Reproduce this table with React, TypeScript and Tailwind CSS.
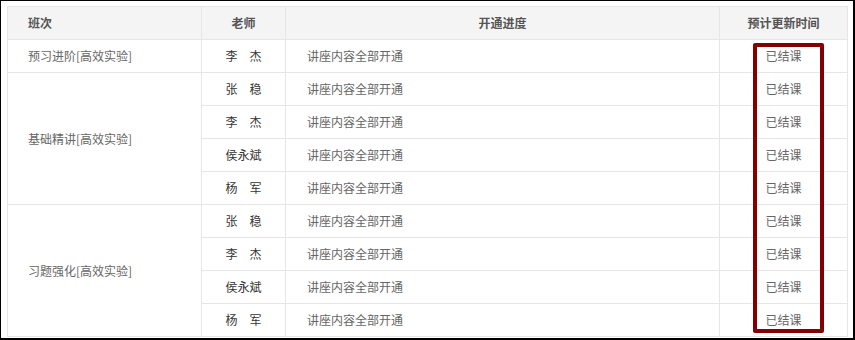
import React from 'react';

const groups = [
  { name: '预习进阶[高效实验]', teachers: ['李　杰'] },
  { name: '基础精讲[高效实验]', teachers: ['张　稳', '李　杰', '侯永斌', '杨　军'] },
  { name: '习题强化[高效实验]', teachers: ['张　稳', '李　杰', '侯永斌', '杨　军'] },
];

function App() {
  return (
    <div
      className="relative w-[855px] h-[340px] bg-white border-t border-l border-r-2 border-b-2 border-black pl-[6px] pt-[5px]"
      style={{ fontFamily: '"Noto Sans CJK SC", "Noto Sans", sans-serif' }}
    >
      <table className="w-[840px] border-collapse table-fixed text-[12px]">
        <colgroup>
          <col className="w-[194px]" />
          <col className="w-[84px]" />
          <col className="w-[434px]" />
          <col className="w-[128px]" />
        </colgroup>
        <thead>
          <tr className="h-[33px] bg-[#f4f4f4] text-[#555] font-bold">
            <th className="border border-[#e6e6e6] text-left pl-[20px] font-bold">班次</th>
            <th className="border border-[#e6e6e6] text-center font-bold">老师</th>
            <th className="border border-[#e6e6e6] text-center font-bold">开通进度</th>
            <th className="border border-[#e6e6e6] text-center font-bold">预计更新时间</th>
          </tr>
        </thead>
        <tbody>
          {groups.map((g) =>
            g.teachers.map((t, i) => (
              <tr key={g.name + i} className="h-[33px]">
                {i === 0 && (
                  <td
                    rowSpan={g.teachers.length}
                    className="border border-[#e6e6e6] pl-[20px] text-[#666] align-middle"
                  >
                    {g.name}
                  </td>
                )}
                <td className="border border-[#e6e6e6] text-center text-[#333]">{t}</td>
                <td className="border border-[#e6e6e6] pl-[21px] text-[#666]">讲座内容全部开通</td>
                <td className="border border-[#e6e6e6] text-center text-[#666]">已结课</td>
              </tr>
            ))
          )}
        </tbody>
      </table>
      <div className="absolute left-[752px] top-[42px] w-[71px] h-[290px] border-[4px] border-[#840000] rounded-[2px]" />
    </div>
  );
}

export default App;
